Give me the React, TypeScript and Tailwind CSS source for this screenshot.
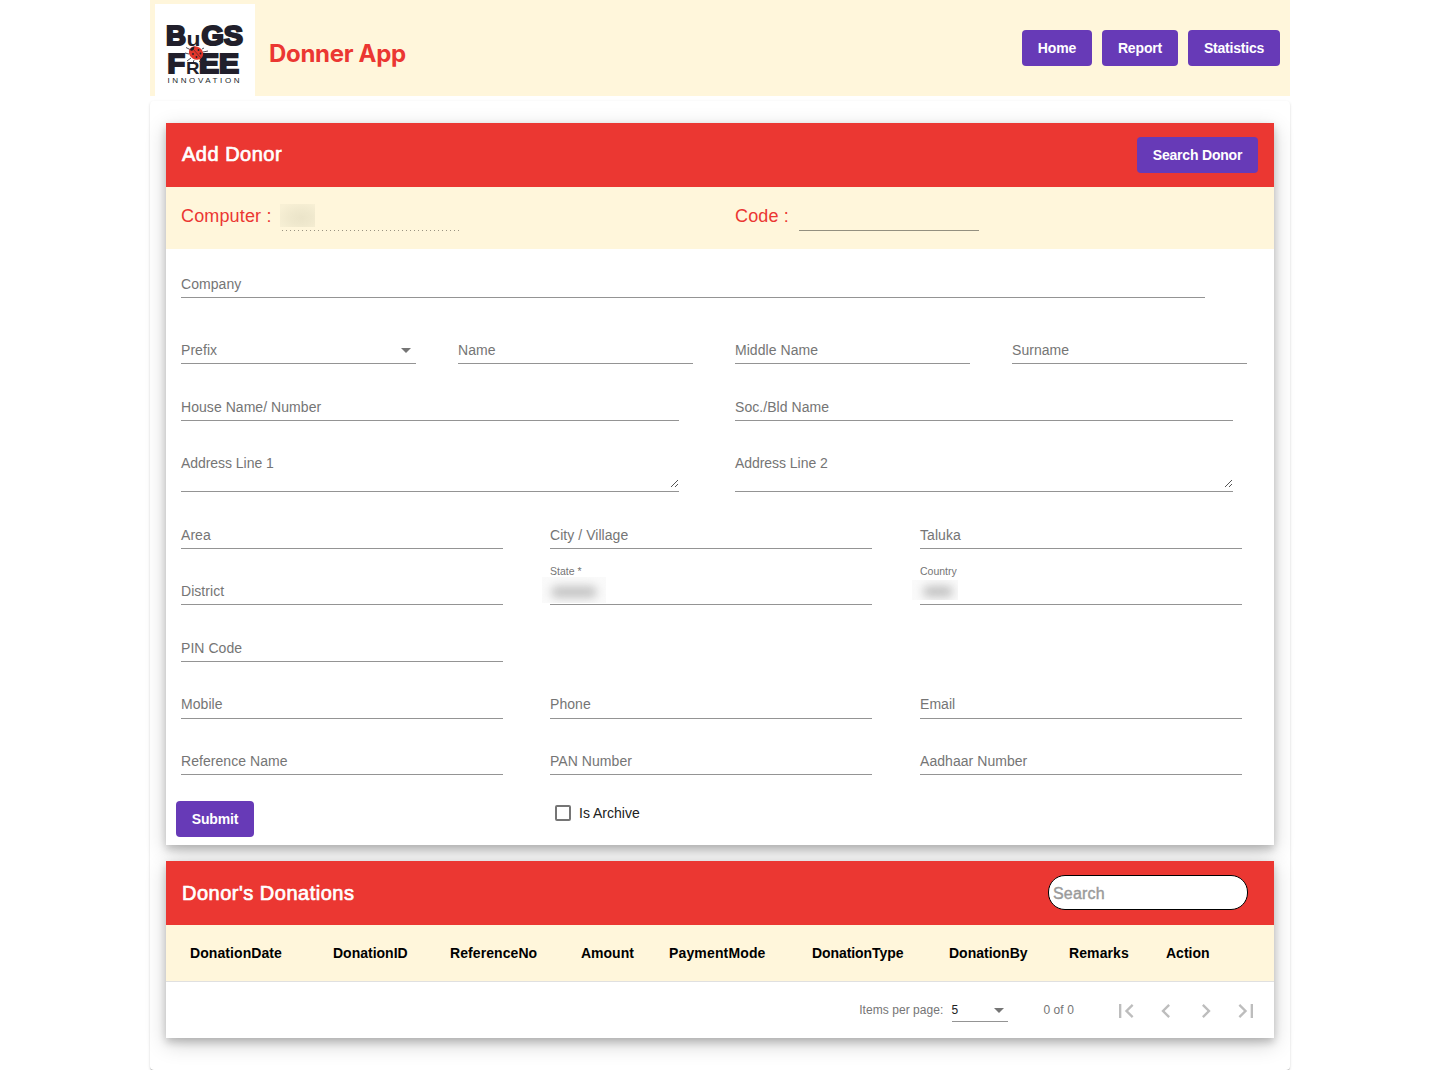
import React from "react";

const SHADOW = "shadow-[0_4px_8px_0_rgba(0,0,0,0.2),0_6px_20px_0_rgba(0,0,0,0.19)]";

function Button({ children, className = "" }: { children: React.ReactNode; className?: string }) {
  return (
    <button
      className={`h-9 rounded bg-[#673ab7] text-center text-[14px] leading-9 font-bold whitespace-nowrap text-white ${className}`}
    >
      {children}
    </button>
  );
}

function Caret() {
  return (
    <svg width="10" height="5" viewBox="0 0 10 5" className="shrink-0">
      <path d="M0 0h10L5 5z" fill="#757575" />
    </svg>
  );
}

function Grip() {
  return (
    <svg width="9" height="9" viewBox="0 0 9 9" className="mb-[3px]" shapeRendering="crispEdges">
      <path d="M1 8L8 1M5 8L8 5" stroke="#555" strokeWidth="1" fill="none" />
    </svg>
  );
}

function Field({
  label,
  width,
  select,
  pad = "pb-[4px]",
}: {
  label: string;
  width: string;
  select?: boolean;
  pad?: string;
}) {
  return (
    <div className={`flex items-center justify-between border-b border-[#949494] ${pad} ${width}`}>
      <span className="text-[14px] leading-[18px] tracking-[0.05px] text-[#757575]">{label}</span>
      {select && (
        <span className="pr-[5px]">
          <Caret />
        </span>
      )}
    </div>
  );
}

function AreaField({ label }: { label: string }) {
  return (
    <div className="flex h-[38px] w-[498px] justify-between border-b border-[#949494]">
      <span className="text-[14px] leading-[18px] tracking-[-0.05px] text-[#757575]">{label}</span>
      <span className="flex items-end">
        <Grip />
      </span>
    </div>
  );
}

function FilledField({ label, smudge }: { label: string; smudge: React.ReactNode }) {
  return (
    <div className="flex h-[41px] w-[322px] flex-col border-b border-[#949494]">
      <span className="text-[10.5px] leading-[14px] text-[#757575]">{label}</span>
      {smudge}
    </div>
  );
}

function Row({ cols, height, children }: { cols: string; height: string; children: React.ReactNode }) {
  return <div className={`grid items-end pl-[15px] ${cols} ${height}`}>{children}</div>;
}

const COL4 = "grid-cols-[277px_277px_277px_262px]";
const COL3 = "grid-cols-[369px_370px_354px]";
const COL2 = "grid-cols-[554px_539px]";

function Logo() {
  return (
    <svg
      width="100"
      height="94"
      viewBox="0 0 100 94"
      className="shrink-0 bg-white"
      fontFamily="'Liberation Sans', Arial, sans-serif"
      fontWeight="bold"
      fill="#211f2b"
    >
      <g stroke="#211f2b" strokeWidth="2.2">
        <text x="11" y="41" fontSize="27.500" textLength="20" lengthAdjust="spacingAndGlyphs">B</text>
        <text x="46.500" y="41" fontSize="27.500" textLength="41.500" lengthAdjust="spacingAndGlyphs">GS</text>
        <text x="12.500" y="69" fontSize="27.500" textLength="17.500" lengthAdjust="spacingAndGlyphs">F</text>
        <text x="44" y="69" fontSize="27.500" textLength="40" lengthAdjust="spacingAndGlyphs">EE</text>
      </g>
      <text x="31.500" y="42.300" fontSize="21" textLength="14" lengthAdjust="spacingAndGlyphs">u</text>
      <text x="31" y="70" fontSize="17" textLength="13.500" lengthAdjust="spacingAndGlyphs">R</text>
      <g stroke="#211f2b" strokeWidth="0.8" fill="none">
        <path d="M36 46l-5-2.500M34 50l-4-1M36 54l-4 3M47 45l2-1M48 48l5-1M47 54l3 2M44 57l2 2M39 56l-1 3" />
      </g>
      <ellipse cx="41" cy="49" rx="7.500" ry="6.500" fill="#e2362b" transform="rotate(35 41 49)" />
      <path d="M35 46q1-3 4.500-3.500l-.5 2.500-2 2z" fill="#211f2b" />
      <path d="M38 45l7.500 8.500" stroke="#211f2b" strokeWidth="0.5" />
      <g fill="#211f2b">
        <circle cx="38" cy="50" r="0.900" />
        <circle cx="43.500" cy="46" r="0.900" />
        <circle cx="41.500" cy="53" r="0.900" />
        <circle cx="45.500" cy="49.500" r="0.900" />
      </g>
      <text x="12.500" y="79" fontSize="8" fontWeight="normal" textLength="72">INNOVATION</text>
    </svg>
  );
}

function PageIcon({ d }: { d: string }) {
  return (
    <svg width="28" height="28" viewBox="0 0 24 24" fill="#bdbdbd">
      <path d={d} />
    </svg>
  );
}

const HEADERS = [
  ["DonationDate", "w-[143px] tracking-[0.08px]"],
  ["DonationID", "w-[117px]"],
  ["ReferenceNo", "w-[131px] tracking-[0.08px]"],
  ["Amount", "w-[88px]"],
  ["PaymentMode", "w-[143px] tracking-[0.15px]"],
  ["DonationType", "w-[137px] tracking-[-0.08px]"],
  ["DonationBy", "w-[120px]"],
  ["Remarks", "w-[97px] tracking-[0.1px]"],
  ["Action", "w-[80px]"],
];

export default function App() {
  return (
    <div className="mx-auto h-[1070px] w-[1140px] overflow-visible bg-white font-['Liberation_Sans',Arial,sans-serif]">
      <header className="flex h-24 items-start bg-[#fff6db] pt-1 pl-[5px]">
        <Logo />
        <h1 className="mt-[32px] ml-[14px] font-[Inter,sans-serif] text-[24px] leading-9 font-bold tracking-[-0.3px] text-[#eb3732]">
          Donner App
        </h1>
        <nav className="mt-[26px] mr-[10px] ml-auto flex gap-[10px]">
          <Button className="w-[70px] tracking-[-0.15px]">Home</Button>
          <Button className="w-[76px] tracking-[-0.15px]">Report</Button>
          <Button className="w-[92px] tracking-[-0.2px]">Statistics</Button>
        </nav>
      </header>

      <main className="mt-[5px] h-[969px] rounded px-4 pt-[22px] shadow-[0_2px_1px_-1px_rgba(0,0,0,0.2),0_1px_1px_0_rgba(0,0,0,0.14),0_1px_3px_0_rgba(0,0,0,0.12)]">
        <section className={`h-[722px] bg-white ${SHADOW}`}>
          <div className="flex h-16 items-center justify-between bg-[#eb3732] px-4">
            <h2 className="mb-[2px] text-[20px] leading-8 tracking-[0.5px] text-white [-webkit-text-stroke:0.7px_white]">
              Add Donor
            </h2>
            <Button className="w-[121px] tracking-[-0.2px]">Search Donor</Button>
          </div>

          <div className="grid h-[62px] grid-cols-2 bg-[#fff6db] pt-[17px] text-[18px] leading-6 tracking-[0.15px] text-[#eb3732]">
            <div className="flex pl-[15px]">
              <span className="w-[101px]">Computer :</span>
              <span className="flex h-[27px] w-[180px] bg-[repeating-linear-gradient(to_right,#999382_0_1px,transparent_1px_4px)] bg-[length:100%_1px] bg-bottom bg-no-repeat">
                <span className="-ml-[2px] h-[23px] w-[35px] bg-[radial-gradient(ellipse_at_60%_60%,#ebe4c9_0%,#efe8cd_35%,#f8f0d5_85%)]" />
              </span>
            </div>
            <div className="flex pl-[15px]">
              <span className="w-[64px]">Code :</span>
              <span className="h-[27px] w-[180px] border-b border-[#949080]" />
            </div>
          </div>

          <Row cols="grid-cols-1" height="h-[49px]">
            <Field label="Company" width="w-[1024px]" />
          </Row>
          <Row cols={COL4} height="h-[66px]">
            <Field label="Prefix" width="w-[235px]" select />
            <Field label="Name" width="w-[235px]" />
            <Field label="Middle Name" width="w-[235px]" />
            <Field label="Surname" width="w-[235px]" />
          </Row>
          <Row cols={COL2} height="h-[57px]">
            <Field label="House Name/ Number" width="w-[498px]" />
            <Field label="Soc./Bld Name" width="w-[498px]" />
          </Row>
          <Row cols={COL2} height="h-[71px]">
            <AreaField label="Address Line 1" />
            <AreaField label="Address Line 2" />
          </Row>
          <Row cols={COL3} height="h-[57px]">
            <Field label="Area" width="w-[322px]" />
            <Field label="City / Village" width="w-[322px]" />
            <Field label="Taluka" width="w-[322px]" />
          </Row>
          <Row cols={COL3} height="h-[56px]">
            <Field label="District" width="w-[322px]" />
            <FilledField
              label="State *"
              smudge={
                <span className="-mt-px -ml-2 flex h-[26px] w-[64px] items-center justify-center overflow-hidden bg-[#fafafa]">
                  <span className="mt-[4px] h-[12px] w-[46px] rounded-full bg-[#c4c4c4] blur-[5px]" />
                </span>
              }
            />
            <FilledField
              label="Country"
              smudge={
                <span className="mt-[2px] -ml-2 flex h-[20px] w-[46px] items-center justify-center overflow-hidden bg-[#fafafa]">
                  <span className="mt-[3px] ml-[6px] h-[11px] w-[30px] rounded-full bg-[#c0c0c0] blur-[5px]" />
                </span>
              }
            />
          </Row>
          <Row cols={COL3} height="h-[57px]">
            <Field label="PIN Code" width="w-[322px]" />
          </Row>
          <Row cols={COL3} height="h-[57px]">
            <Field label="Mobile" width="w-[322px]" pad="pb-[5px]" />
            <Field label="Phone" width="w-[322px]" pad="pb-[5px]" />
            <Field label="Email" width="w-[322px]" pad="pb-[5px]" />
          </Row>
          <Row cols={COL3} height="h-[56px]">
            <Field label="Reference Name" width="w-[322px]" />
            <Field label="PAN Number" width="w-[322px]" />
            <Field label="Aadhaar Number" width="w-[322px]" />
          </Row>
          <div className="flex items-start pt-[26px] pl-[10px]">
            <Button className="w-[78px] tracking-[-0.15px]">Submit</Button>
            <label className="mt-[3px] ml-[301px] flex items-center gap-2 text-[14px] leading-[18px] text-[#212121]">
              <span className="size-4 rounded-[2px] border-2 border-[#757575]" />
              Is Archive
            </label>
          </div>
        </section>

        <section className={`mt-4 h-[177px] bg-white ${SHADOW}`}>
          <div className="flex h-16 items-center justify-between bg-[#eb3732] pr-[26px] pl-4">
            <h2 className="text-[20px] leading-8 tracking-[0.5px] text-white [-webkit-text-stroke:0.7px_white]">
              Donor's Donations
            </h2>
            <div className="mb-[2px] flex h-[35px] w-[200px] items-center rounded-[17px] border border-black bg-white pt-[3px] pl-[4px] text-[16px] tracking-[0.2px] text-[#9a9a9a] [-webkit-text-stroke:0.4px_#9a9a9a]">
              Search
            </div>
          </div>
          <div className="flex h-[57px] items-center border-b border-[#e0e0e0] bg-[#fff6db] pl-6 text-[14px] font-bold text-black">
            {HEADERS.map(([name, width]) => (
              <span key={name} className={width}>
                {name}
              </span>
            ))}
          </div>
          <div className="flex h-14 items-center justify-end pr-[14px] text-[12px] text-[#757575]">
            <span className="mr-[9px] tracking-[0.05px]">Items per page:</span>
            <span className="mt-[1px] mr-[35px] flex h-[23px] w-14 items-center justify-between border-b border-[#949494] pr-1 text-[#212121]">
              <span className="-ml-px">5</span>
              <Caret />
            </span>
            <span className="mr-[38px] tracking-[0.1px]">0 of 0</span>
            <span className="flex gap-3 pt-[2px]">
              <PageIcon d="M18.410 16.590L13.820 12l4.590-4.590L17 6l-6 6 6 6zM6 6h2v12H6z" />
              <PageIcon d="M15.410 7.410L14 6l-6 6 6 6 1.410-1.410L10.830 12z" />
              <PageIcon d="M10 6L8.590 7.410 13.170 12l-4.580 4.590L10 18l6-6z" />
              <PageIcon d="M5.590 7.410L10.180 12l-4.590 4.590L7 18l6-6-6-6zM16 6h2v12h-2z" />
            </span>
          </div>
        </section>
      </main>
    </div>
  );
}
